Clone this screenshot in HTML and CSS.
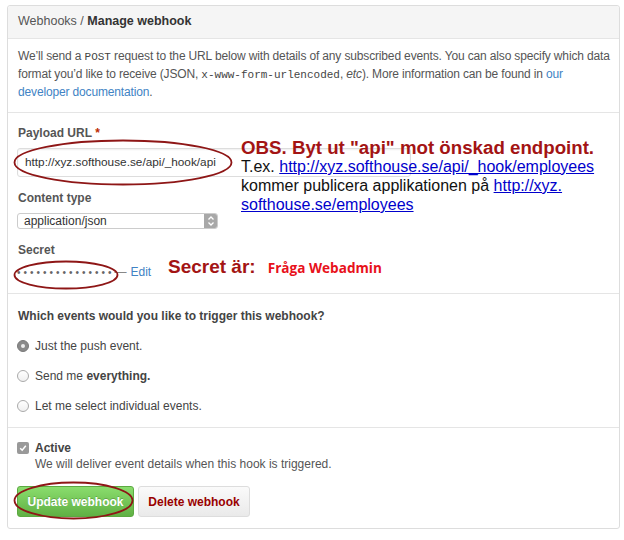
FILE: index.html
```html
<!DOCTYPE html>
<html>
<head>
<meta charset="utf-8">
<link rel="stylesheet" href="styles.css">
</head>
<body>
<div class="panel">
  <div class="panel-head"><span class="crumb">Webhooks /</span> <strong>Manage webhook</strong></div>
  <div class="section intro">
    <div class="line">We’ll send a <code>POST</code> request to the URL below with details of any subscribed events. You can also specify which data</div>
    <div class="line">format you’d like to receive (JSON, <code>x-www-form-urlencoded</code>, <em>etc</em>). More information can be found in <a href="#">our</a></div>
    <div class="line"><a href="#">developer documentation</a>.</div>
  </div>
  <div class="section form">
    <div class="label">Payload URL <span class="req">*</span></div>
    <div class="input">http://xyz.softhouse.se/api/_hook/api</div>
    <div class="label gap">Content type</div>
    <div class="select"><span>application/json</span><span class="sel-arrow"><svg width="8" height="12" viewBox="0 0 8 12"><path d="M1.5 4.5 L4 2 L6.5 4.5 M1.5 7.5 L4 10 L6.5 7.5" fill="none" stroke="#fff" stroke-width="1.3"/></svg></span></div>
    <div class="label gap">Secret</div>
    <div class="secret"><span class="dots">•••••••••••••••</span><span class="dash">—</span><a href="#">Edit</a></div>
  </div>
  <div class="section events">
    <div class="label">Which events would you like to trigger this webhook?</div>
    <div class="radio-row"><span class="radio checked"></span><span>Just the push event.</span></div>
    <div class="radio-row"><span class="radio"></span><span>Send me <strong>everything.</strong></span></div>
    <div class="radio-row"><span class="radio"></span><span>Let me select individual events.</span></div>
  </div>
  <div class="section active">
    <div class="check-row"><span class="check"><svg width="8" height="8" viewBox="0 0 8 8"><path d="M1.2 4.2 L3.2 6.2 L6.8 1.8" fill="none" stroke="#fff" stroke-width="1.5"/></svg></span><strong>Active</strong></div>
    <div class="note">We will deliver event details when this hook is triggered.</div>
    <div class="buttons">
      <button class="btn btn-primary">Update webhook</button>
      <button class="btn btn-danger">Delete webhook</button>
    </div>
  </div>
</div>

<div class="annot obs">
  <div class="obs-title">OBS. Byt ut "api" mot önskad endpoint.</div>
  <div class="obs-body">T.ex. <a href="#">http://xyz.softhouse.se/api/_hook/employees</a><br>kommer publicera applikationen på <a href="#">http://xyz.<br>softhouse.se/employees</a></div>
</div>
<div class="annot secret-note"><span class="sn-title">Secret är:</span><span class="sn-val">Fråga Webadmin</span></div>

<svg class="marks" width="624" height="540" viewBox="0 0 624 540">
  <ellipse cx="123" cy="162.5" rx="108.5" ry="22" fill="none" stroke="#8e1616" stroke-width="1.8"/>
  <ellipse cx="66" cy="275" rx="51.5" ry="13.5" fill="none" stroke="#8e1616" stroke-width="1.8"/>
  <ellipse cx="73.5" cy="500.5" rx="59" ry="18" fill="none" stroke="#8e1616" stroke-width="1.8"/>
</svg>
</body>
</html>
```
FILE: styles.css
```css
* { box-sizing: border-box; }
body {
  margin: 0;
  background: #fff;
  font-family: "Liberation Sans", Arial, sans-serif;
  font-size: 12px;
  color: #333;
  position: relative;
  width: 624px;
  height: 540px;
  overflow: hidden;
}
a { color: #4183c4; text-decoration: none; }
.panel {
  margin: 5px 0 0 7px;
  width: 613px;
  border: 1px solid #ddd;
  border-radius: 3px;
  background: #fff;
}
.panel-head {
  height: 33px;
  padding: 0 10px;
  line-height: 31px;
  font-size: 12.5px;
  background: #f5f5f5;
  border-bottom: 1px solid #e5e5e5;
  border-radius: 3px 3px 0 0;
  color: #333;
}
.crumb { color: #555; }
.section {
  padding: 0 10px;
  border-bottom: 1px solid #e5e5e5;
}
.section:last-child { border-bottom: none; }
.intro {
  color: #555;
  line-height: 17px;
  padding-top: 9px;
  height: 74px;
}
.intro .line { white-space: nowrap; letter-spacing: -0.15px; }
code {
  font-family: "Liberation Mono", "DejaVu Sans Mono", monospace;
  font-size: 11px;
  letter-spacing: 0;
  color: #444;
}
.form { height: 181px; padding-top: 13px; }
.label {
  font-weight: bold;
  color: #555;
  line-height: 14px;
  height: 14px;
}
.req { color: #bd2c00; }
.label.gap { margin-top: 14px; }
.input {
  margin-top: 8px;
  margin-left: -1px;
  width: 394px;
  height: 29px;
  border: 1px solid #ddd;
  border-radius: 3px;
  background: transparent;
  box-shadow: inset 0 1px 2px rgba(0,0,0,0.07);
  padding-left: 7px;
  font-size: 11.8px;
  line-height: 27px;
  color: #333;
}
.select {
  margin-top: 8px;
  margin-left: -1px;
  width: 201px;
  height: 16px;
  border: 1px solid #ccc;
  border-radius: 3px;
  display: flex;
  justify-content: space-between;
  align-items: center;
  padding-left: 6px;
  font-size: 12px;
  color: #333;
  overflow: hidden;
}
.sel-arrow {
  width: 13px;
  height: 16px;
  background: #a8a8a8;
  display: flex;
  align-items: center;
  justify-content: center;
}
.secret {
  margin-top: 8px;
  height: 14px;
  display: flex;
  align-items: center;
}
.dots {
  font-size: 10px;
  letter-spacing: 3px;
  color: #666;
  margin-left: -1px;
}
.dash { color: #888; margin: 0 4px 0 0; font-size: 12px; }
.events { height: 134px; padding-top: 15px; }
.events .label { color: #444; }
.radio-row {
  display: flex;
  align-items: center;
  height: 14px;
  margin-top: 16px;
  color: #444;
}
.radio-row:first-of-type { margin-top: 15px; }
.radio {
  width: 12px;
  height: 12px;
  border-radius: 50%;
  border: 1px solid #aaa;
  background: linear-gradient(#fff, #f0f0f0);
  margin-left: -1px;
  margin-right: 6px;
  position: relative;
  flex: none;
}
.radio.checked {
  background: #8a8a8a;
  border-color: #7a7a7a;
}
.radio.checked::after {
  content: "";
  position: absolute;
  left: 3px; top: 3px;
  width: 4px; height: 4px;
  border-radius: 50%;
  background: #eee;
}
.active { height: 100px; padding-top: 13px; }
.check-row {
  display: flex;
  align-items: center;
  height: 14px;
  color: #444;
}
.check {
  width: 12px;
  height: 12px;
  border-radius: 2px;
  background: #999;
  margin-left: -1px;
  margin-right: 6px;
  display: flex;
  align-items: center;
  justify-content: center;
}
.note {
  margin: 2px 0 0 17px;
  line-height: 14px;
  color: #555;
}
.buttons {
  display: flex;
  gap: 4px;
  margin: 15px 0 0 -1px;
}
.btn {
  height: 31px;
  border-radius: 3px;
  font-family: "Liberation Sans", Arial, sans-serif;
  font-size: 12px;
  font-weight: bold;
  padding: 0;
  cursor: pointer;
}
.btn-primary {
  width: 117px;
  color: #fff;
  background: linear-gradient(#8add6d, #60b044);
  border: 1px solid #5ca941;
  text-shadow: 0 -1px 0 rgba(0,0,0,0.2);
}
.btn-danger {
  width: 112px;
  color: #900;
  background: linear-gradient(#fafafa, #eaeaea);
  border: 1px solid #ddd;
}
.annot { position: absolute; font-family: "Liberation Sans", Arial, sans-serif; }
.obs { left: 241px; top: 137px; }
.obs-title {
  font-size: 18.7px;
  font-weight: bold;
  color: #a31414;
  line-height: 22px;
}
.obs-body {
  font-size: 16px;
  line-height: 19px;
  color: #111;
  margin-top: -2px;
}
.obs-body a { text-decoration: underline; color: #0000cc; }
.secret-note {
  left: 168px;
  top: 256px;
  display: flex;
  align-items: baseline;
}
.sn-title {
  font-size: 19px;
  font-weight: bold;
  color: #a31414;
}
.sn-val {
  margin-left: 12px;
  font-family: "Open Sans", "Noto Sans", sans-serif;
  font-size: 13.6px;
  font-weight: bold;
  color: #e8111b;
}
.marks { position: absolute; left: 0; top: 0; pointer-events: none; }
```
